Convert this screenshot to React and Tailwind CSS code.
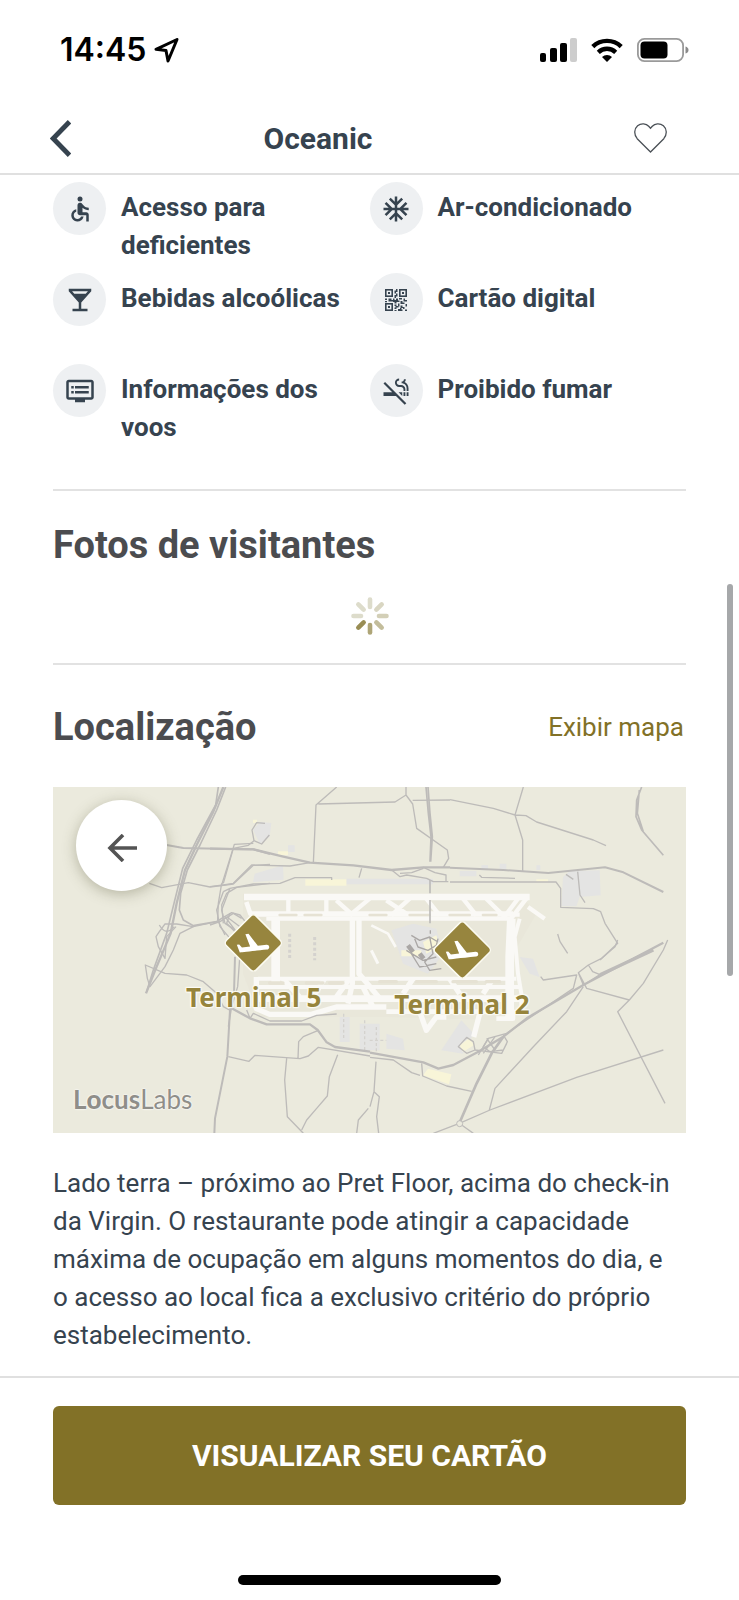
import { MdAccessible, MdAcUnit, MdLocalBar, MdOutlineDvr, MdSmokeFree } from 'react-icons/md'

function QrIcon({ className }) {
  return (
    <svg viewBox="0 0 22 22" className={className} fill="currentColor" aria-hidden="true">
      <g fill="none" stroke="currentColor" strokeWidth="1.6">
        <rect x="0.8" y="0.8" width="6.4" height="6.4" />
        <rect x="14.8" y="0.8" width="6.4" height="6.4" />
        <rect x="0.8" y="14.8" width="6.4" height="6.4" />
      </g>
      <path d="M3 3h2v2h-2zM17 3h2v2h-2zM3 17h2v2h-2z" />
      <path d="M9.500 1.500h1.500v-1.500h1.500v3h-1.500v1.500h-1.500zM9.500 6h1.500v-1.500h1.500v3h-1.500v1.500h-1.500zM0 9.500h2v1.500h-2zM3.500 9.500h3v1.500h1.500v1.500h-4.500zM0 12h2v1.300h-2zM8 9.500h1.500v1.500h1.500v-1.500h2v2h1.500v1.500h-3v1.500h-2v-1.500h-1.500zM14 9h3v1.500h-3zM18.500 9.500h1.500v1.500h2v1.500h-3.500zM15.500 12h2v1.500h2v1.500h-4zM9.500 15.500h2v1.500h2v1.500h-2v1.500h-2v-1.500h1v-1.500h-1zM13 14.500h1.500v3h-1.500zM15.500 16.500h2v1.500h2v2h-1.500v-1h-2.500zM20.500 15h1.500v2.500h-1.500zM13 20h2v-1h1.500v1.500h1v1.500h-4.500zM20 20.500h2v1.500h-2zM9.500 21h2v1h-2z" />
    </svg>
  )
}

const amenities = [
  { label: 'Acesso para deficientes', Icon: MdAccessible, size: 'size-[30px]' },
  { label: 'Ar-condicionado', Icon: MdAcUnit, size: 'size-[30px]' },
  { label: 'Bebidas alcoólicas', Icon: MdLocalBar, size: 'size-[30px]' },
  { label: 'Cartão digital', Icon: QrIcon, size: 'size-[22px]' },
  { label: 'Informações dos voos', Icon: MdOutlineDvr, size: 'size-[30px]' },
  { label: 'Proibido fumar', Icon: MdSmokeFree, size: 'size-[30px]' },
]

const terminals = [
  { name: 'Terminal 5', left: '31.7%', top: '36.5%' },
  { name: 'Terminal 2', left: '64.6%', top: '38.5%' },
]

// one entry per spoke, clockwise from the top
const spokes = ['#dddccb', '#d9d6c2', '#d3cfb7', '#c3bd9b', '#aea577', '#998d54', '#dddccb', '#dddccb']

function StatusBar() {
  return (
    <div className="flex h-[99px] items-center justify-between pr-[50px] pl-[60px] font-['Inter',sans-serif] text-black">
      <div className="flex items-center gap-2">
        <span className="text-[32px] font-semibold">14:45</span>
        <svg viewBox="0 0 26 26" className="size-[26px]" fill="none" stroke="currentColor" strokeWidth="3" strokeLinejoin="round" aria-hidden="true">
          <path d="M23 2.500 2 12.300 12 13.500 14 24z" />
        </svg>
      </div>
      <div className="flex items-center">
        <svg viewBox="0 0 37 24" className="mr-[14px] h-6 w-[37px]" aria-hidden="true">
          <rect x="0" y="15" width="6" height="9" rx="2" />
          <rect x="10" y="10" width="7" height="14" rx="2" />
          <rect x="20" y="5" width="7" height="19" rx="2" />
          <rect x="30" y="0" width="7" height="24" rx="2" fill="#cdcdcd" />
        </svg>
        <svg viewBox="0 0 32 24" className="mr-[14px] h-6 w-8" fill="none" stroke="#000" strokeWidth="4.400" aria-hidden="true">
          <path d="M1.800 8.600A20.500 20.500 0 0 1 30.200 8.600" />
          <path d="M7.300 14.300A12.600 12.600 0 0 1 24.700 14.300" />
          <path d="M16 24 11 18.900A7.400 7.400 0 0 1 21 18.900z" fill="#000" stroke="none" />
        </svg>
        <svg viewBox="0 0 52 24" className="h-6 w-[52px]" aria-hidden="true">
          <rect x="0.900" y="0.900" width="45.200" height="22.200" rx="6.500" fill="none" stroke="#9a9a9a" strokeWidth="1.800" />
          <rect x="3.500" y="3.500" width="27" height="17" rx="4" />
          <path d="M48.500 8.500q3 1 3 3.500t-3 3.500z" fill="#8a8a8a" />
        </svg>
      </div>
    </div>
  )
}

function NavBar() {
  return (
    <div className="flex h-[74px] items-center pt-1 pr-[72px] pl-[50px] text-[#36434f]">
      <button type="button" aria-label="Voltar" className="shrink-0">
        <svg viewBox="0 0 21 37" className="h-[37px] w-[21px]" fill="none" stroke="currentColor" strokeWidth="4.800" aria-hidden="true">
          <path d="M19.500 1.800 3.200 18.500 19.500 35.200" />
        </svg>
      </button>
      <h1 className="flex-1 text-center text-[30px] font-bold">Oceanic</h1>
      <button type="button" aria-label="Adicionar aos favoritos" className="shrink-0 pl-[69px]">
        <svg viewBox="0 0 33 30" className="h-[30px] w-[33px]" fill="none" stroke="#4b5157" strokeWidth="1.300" aria-hidden="true">
          <path d="M16.500 29 3.200 15.700C-.4 11.500.2 5.600 3.600 2.700 7.200-.2 12.200.5 14.700 3.200L16.500 5.200 18.300 3.200C20.800.5 25.800-.2 29.400 2.700 32.800 5.600 33.400 11.500 29.800 15.700z" />
        </svg>
      </button>
    </div>
  )
}

function Spinner() {
  return (
    <svg viewBox="-19 -19 38 38" role="img" aria-label="Carregando" className="mx-auto mt-7 size-[38px]">
      {spokes.map((color, i) => (
        <line key={i} x1="0" y1="-9" x2="0" y2="-16.500" stroke={color} strokeWidth="4.600" strokeLinecap="round" transform={`rotate(${i * 45})`} />
      ))}
    </svg>
  )
}

function MapDrawing() {
  return (
    <svg viewBox="0 0 1899 1038" className="size-full" preserveAspectRatio="none" fill="none" stroke="#bdbbb9" strokeWidth="5" strokeLinejoin="round" aria-hidden="true">
      <rect width="1899" height="1038" fill="#ebeadd" stroke="none" />

      {/* airfield ground */}
      <path d="M570 320H1400L1450 380 1370 520 1340 700 1000 690H620L570 560z" fill="#e9e7da" stroke="none" />

      {/* buildings and car parks */}
      <g fill="#e4e4e3" stroke="none">
        <path d="M600 128 622 105 655 108 650 150 620 170z" />
        <path d="M605 260 690 235 692 278 600 285zM880 275H1140V292H880zM705 175H725V195H705z" />
        <path d="M1530 270 1550 252 1640 250 1643 325 1580 330 1570 358H1525z" />
        <path d="M1285 235h20v15h-20zM1340 230h20v18h-20zM1220 252h50v16h-50zM1450 235h12v14h-12z" />
        <path d="M1015 430 1080 410 1150 425 1170 500 1125 560 1050 530z" />
        <path d="M860 690h30v75h-30zM920 710h60v80h-60zM1000 740 1050 755 1055 790 1000 785z" />
        <path d="M1165 790 1225 700 1262 740 1230 800z" />
        <path d="M1400 510 1440 515 1460 570 1430 560z" />
      </g>
      <g fill="#f8f5d8" stroke="none">
        <path d="M757 277H880V296H757zM675 193H705V204H675z" />
        <path d="M1110 865 1125 845 1195 862 1188 892z" />
        <path d="M1220 775 1250 752 1262 775 1230 795zM1450 277H1485V284H1450z" />
        <path d="M600 98h12v10h-12zM1045 490h60v18h-60zM1110 465 1150 445 1160 480 1120 500z" />
      </g>

      {/* runways and taxiways */}
      <g stroke="#faf9f6" strokeWidth="16" fill="none">
        <path d="M573 330H1430" strokeWidth="20" />
        <path d="M580 345 592 380H1380" strokeWidth="14" />
        <path d="M600 383H1400" strokeWidth="13" />
        <path d="M640 395H1380" strokeWidth="12" />
        <path d="M706 335V385M820 335V385M850 340 900 385M950 335 890 385M1000 340 1060 380M1070 335 1015 385M1120 335 1160 385M1230 335 1270 385M1300 335 1350 385M1395 335 1350 395M1420 335 1370 400M1425 360 1475 395" strokeWidth="13" />
        <path d="M668 390V590" strokeWidth="26" />
        <path d="M898 390V590L885 650" strokeWidth="16" />
        <path d="M918 390V560L985 640" strokeWidth="16" />
        <path d="M955 415 1005 440 1028 480" strokeWidth="8" />
        <path d="M955 490 975 530" strokeWidth="9" />
        <path d="M1375 395 1370 510V690" strokeWidth="26" />
        <path d="M1400 395 1385 450 1395 560 1405 620V660" strokeWidth="12" />
        <path d="M615 575H1390M610 600H1400" strokeWidth="12" />
        <path d="M615 635H1400" strokeWidth="20" />
        <path d="M610 570V665L650 682H775L850 660H1000" />
        <path d="M1000 674H1380V695H1330" strokeWidth="14" />
        <path d="M690 575 740 630M815 575 780 630M890 575 850 630M930 600 960 660M1080 575 1050 620M1190 575 1220 620M1320 575 1290 620" />
        <path d="M1095 660 1120 730 1150 690H1180M1280 680 1262 750" />
        <path d="M650 588h40M760 588h50M830 588h40M980 584h50M1090 584h60M1200 584h70M1300 584h40" stroke="#e6e2d4" strokeWidth="10" strokeLinecap="round" />
        <path d="M680 384h50M755 384h50M950 384h50M1070 384h60M1190 384h60M1290 384h40" stroke="#e6e2d4" strokeWidth="8" strokeLinecap="round" />
      </g>

      {/* stands */}
      <g strokeWidth="9" stroke="#d4d2ce" strokeDasharray="9 7">
        <path d="M710 440V520M785 450V520" />
        <path d="M872 680V760M935 700V790M950 760H1000M970 720V800" strokeWidth="4" />
      </g>

      {/* central area */}
      <g stroke="#aaa7a5" strokeWidth="4">
        <path d="M1132 430V440M1132 455V462M1075 445 1100 460 1130 450 1155 465M1085 455 1095 480 1125 490 1150 475 1155 455M1060 490 1110 520 1150 510M1075 500 1100 540 1150 530M1130 450 1140 500 1115 525 1130 550 1165 545" />
        <path d="M1065 475 1080 495M1100 500 1112 515" strokeWidth="14" />
      </g>

      {/* western motorway */}
      <g transform="translate(-9 -21)">
        <g strokeWidth="7">
          <path d="M520 21 490 95 440 195 405 270 380 370 362 460 320 560 288 640" />
          <path d="M505 21 497 75 440 180 398 265 372 370 350 460 310 570 290 635" strokeWidth="5" />
          <path d="M527 21 500 90 450 195 412 270 392 340 388 390 400 420 430 437 500 425 520 412" strokeWidth="5" />
          <path d="M500 425 430 440 380 432 345 432 328 455 318 470 325 500 345 535 350 470 378 440" strokeWidth="4" />
          <path d="M430 440 390 460 370 510 345 560 300 620 292 595 286 555 345 580 410 585 460 605 500 640 520 680 538 690" strokeWidth="4" />
        </g>
        <path d="M350 195 400 204 540 207 610 208 660 222" strokeWidth="6" />
        <path d="M298 310 335 323 415 308 480 321 550 312 610 256 660 253M610 190 553 193 540 235 515 315M660 310 560 322 530 340 515 375 520 430M515 310 505 370 503 420 525 465M520 412 545 398 570 405 590 430M540 400 530 430 555 455M530 410 570 440" strokeWidth="4" />
        <path d="M328 435q20 35 45 5" strokeWidth="4" />
      </g>

      {/* northern roads */}
      <g transform="translate(471 -21)">
        <path d="M0 206 130 208 220 230 300 248 430 256 545 270 640 262 720 262" strokeWidth="7" />
        <path d="M380 21 318 75 310 250M325 72 555 66 588 45V21M588 45 608 72 620 145 712 210 716 235 700 262M608 61 720 60" strokeWidth="4" />
        <path d="M648 21 655 100 663 170 660 245M654 21 660 100 667 170 662 245M660 300V340M660 360V430" />
        <path d="M0 320 40 315 70 310 125 255 240 258 300 248M40 335 60 325 130 312 210 310 255 293 365 293V300M455 265 447 293M40 335 20 390 30 440 60 475M60 325 35 390 45 430 90 460M0 435 30 425 70 400 95 415M45 410 75 450" strokeWidth="4" />
        <path d="M40 310 70 205 115 196 132 182 126 150 140 128 165 130M132 182 155 192 178 165" strokeWidth="4" />
        <path d="M545 270 570 290 590 285 650 295 670 305 715 305M640 262 675 278 708 285V305M640 265 605 278 570 280" strokeWidth="4" />
      </g>

      {/* north-east */}
      <g transform="translate(1191 -21)">
        <path d="M0 263 160 270 295 279 465 262 520 277 640 336" strokeWidth="6" />
        <path d="M0 59 130 85 195 105 228 107 260 126 430 180 468 197M220 21 195 105 218 180V275M88 285 95 292 195 295M0 306H318L332 325V382L430 386 452 395 465 430 503 490 450 540M323 462 330 485 353 520M348 283 370 298M383 275 390 345 405 368" strokeWidth="4" />
        <path d="M575 21 560 60 558 110 575 150 640 226M568 30 562 100 580 155" />
      </g>

      {/* south-west */}
      <g transform="translate(-9 489)">
        <path d="M555 20 552 130 540 180 532 320 495 505 493 550" strokeWidth="6" />
        <path d="M570 10 563 110 545 170 535 230" strokeWidth="4" />
        <path d="M545 175 600 205 650 223H780L803 240 830 277 855 291 960 305" strokeWidth="7" />
        <path d="M590 180 600 205 610 190 660 213H755L800 196 860 192M803 242 760 260 746 275 744 325M535 320 597 334 615 316 750 326 775 318 805 292 960 318M710 325 704 390 712 500 760 550M863 314 838 380 832 438 800 475 770 510 755 540M955 475 925 510 920 550" strokeWidth="4" />
      </g>

      {/* south-east */}
      <g transform="translate(951 489)">
        <path d="M0 308 160 337 205 356 250 345 325 305 400 260 470 205 640 105 880 -22" strokeWidth="7" />
        <path d="M850 0 690 74" strokeWidth="10" />
        <path d="M400 260 365 310 320 400 268 520" strokeWidth="8" />
        <path d="M325 315 355 265 410 250 610 115 620 75 520 90 512 80M655 45 668 65 690 74 640 105 625 68 655 45 695 25 735 -10 743 -30M625 68 650 115 778 150 820 100 880 0 893 -30M778 150 743 185 885 460M640 110 590 185 490 290 375 415 358 480" strokeWidth="4" />
        <path d="M268 520 360 480 620 382 880 300M268 520 190 550M275 525 310 550M0 322 70 330 125 368 150 376M155 340 158 378 230 408 305 424M18 335 12 425 0 470M12 425 28 440 20 500 26 550" strokeWidth="4" />
        <path d="M265 290 290 262 310 275 315 300 290 310zM355 265 340 290 360 305 400 300 412 275 400 255M315 300 395 310 410 280M350 265 375 300M375 260 340 310" strokeWidth="4" />
        <circle cx="269" cy="521" r="9" strokeWidth="3" fill="#ebeadd" />
      </g>
    </svg>
  )
}

function TerminalPin({ name, left, top }) {
  return (
    <div className="absolute flex -translate-x-1/2 flex-col items-center" style={{ left, top }}>
      <svg viewBox="-30 -30 60 60" className="size-[60px]" aria-hidden="true">
        <rect x="-21" y="-21" width="42" height="42" rx="4" fill="#97853e" stroke="#fbfaf0" strokeWidth="1.500" transform="rotate(45)" />
        <path transform="rotate(9) translate(-19 -14) scale(1.600)" fill="#fff" d="M22.070 9.640c-.21-.8-1.040-1.280-1.840-1.060L14.920 10l-6.900-6.430-1.930.51 4.140 7.170-4.970 1.330-1.970-1.540-1.450.39 2.590 4.490s7.120-1.900 16.570-4.430c.81-.23 1.280-1.050 1.070-1.850z" />
      </svg>
      <span className="mt-1 font-['Noto_Sans',sans-serif] text-[26px] leading-10 font-bold whitespace-nowrap text-[#96843c] [text-shadow:0_0_2px_#fff,1px_1px_1px_#fbfaf0,-1px_-1px_1px_#fbfaf0,1px_-1px_1px_#fbfaf0,-1px_1px_1px_#fbfaf0]">
        {name}
      </span>
    </div>
  )
}

function LocationMap() {
  return (
    <div className="relative mt-9 aspect-[633/346] overflow-hidden">
      <MapDrawing />
      {terminals.map((terminal) => (
        <TerminalPin key={terminal.name} {...terminal} />
      ))}
      <button
        type="button"
        aria-label="Voltar no mapa"
        className="absolute top-[13px] left-[23px] flex size-[91px] items-center justify-center rounded-full bg-white text-[#545454] shadow-[0_3px_14px_rgba(80,80,50,0.35)]"
      >
        <svg viewBox="0 0 30 28" className="mt-1 h-7 w-[30px]" fill="none" stroke="currentColor" strokeWidth="3.600" aria-hidden="true">
          <path d="M30 14H3M16 1 3 14 16 27" />
        </svg>
      </button>
      <div className="absolute bottom-4 left-5 font-['Lato',sans-serif] text-[26px] leading-9 text-[#8f8e89] [text-shadow:0_0_2px_#fff,0_0_2px_#fff]">
        <span className="font-bold">
          L<span className="font-black">o</span>cus
        </span>
        <span>Labs</span>
      </div>
    </div>
  )
}

export default function App() {
  return (
    <div className="relative flex min-h-screen flex-col bg-white font-['Roboto',sans-serif] text-[#36434f]">
      <header className="border-b-2 border-[#e0e0e0]">
        <StatusBar />
        <NavBar />
      </header>

      <main className="flex-1 px-[53px] pt-[7px] pb-[21px]">
        <ul className="grid grid-cols-2 gap-y-2">
          {amenities.map(({ label, Icon, size }) => (
            <li key={label} className="flex h-[83px] items-start gap-[15px]">
              <span className="flex size-[53px] shrink-0 items-center justify-center rounded-full bg-[#eef0f2]">
                <Icon className={size} />
              </span>
              <span className="pt-[6px] text-[26px] leading-[38px] font-bold">{label}</span>
            </li>
          ))}
        </ul>

        <section className="mt-[42px] border-t-2 border-[#e2e2e2] pt-[30px]">
          <h2 className="text-[38px] leading-[48px] font-bold text-[#4b4c4f]">Fotos de visitantes</h2>
          <Spinner />
        </section>

        <section className="mt-7 border-t-2 border-[#e2e2e2] pt-[38px]">
          <div className="flex items-center justify-between">
            <h2 className="text-[38px] leading-[48px] font-bold text-[#4b4c4f]">Localização</h2>
            <a href="#mapa" className="pr-[2px] text-[26px] text-[#827127]">
              Exibir mapa
            </a>
          </div>
          <LocationMap />
          <p className="mt-[31px] pr-2 text-[26px] leading-[38px]">
            Lado terra – próximo ao Pret Floor, acima do check-in da Virgin. O restaurante pode atingir a capacidade
            máxima de ocupação em alguns momentos do dia, e o acesso ao local fica a exclusivo critério do próprio
            estabelecimento.
          </p>
        </section>
      </main>

      <footer className="border-t-2 border-[#e0e0e0] px-[53px] pt-7 pb-[15px]">
        <button type="button" className="h-[99px] w-full rounded-md bg-[#827127] text-[30px] font-bold text-white">
          VISUALIZAR SEU CARTÃO
        </button>
        <div className="mx-auto mt-[70px] h-[10px] w-[263px] rounded-full bg-black" />
      </footer>

      {/* scroll indicator */}
      <div className="absolute top-[584px] right-[6px] h-[392px] w-[6px] rounded-full bg-[#a6a8aa]" />
    </div>
  )
}
